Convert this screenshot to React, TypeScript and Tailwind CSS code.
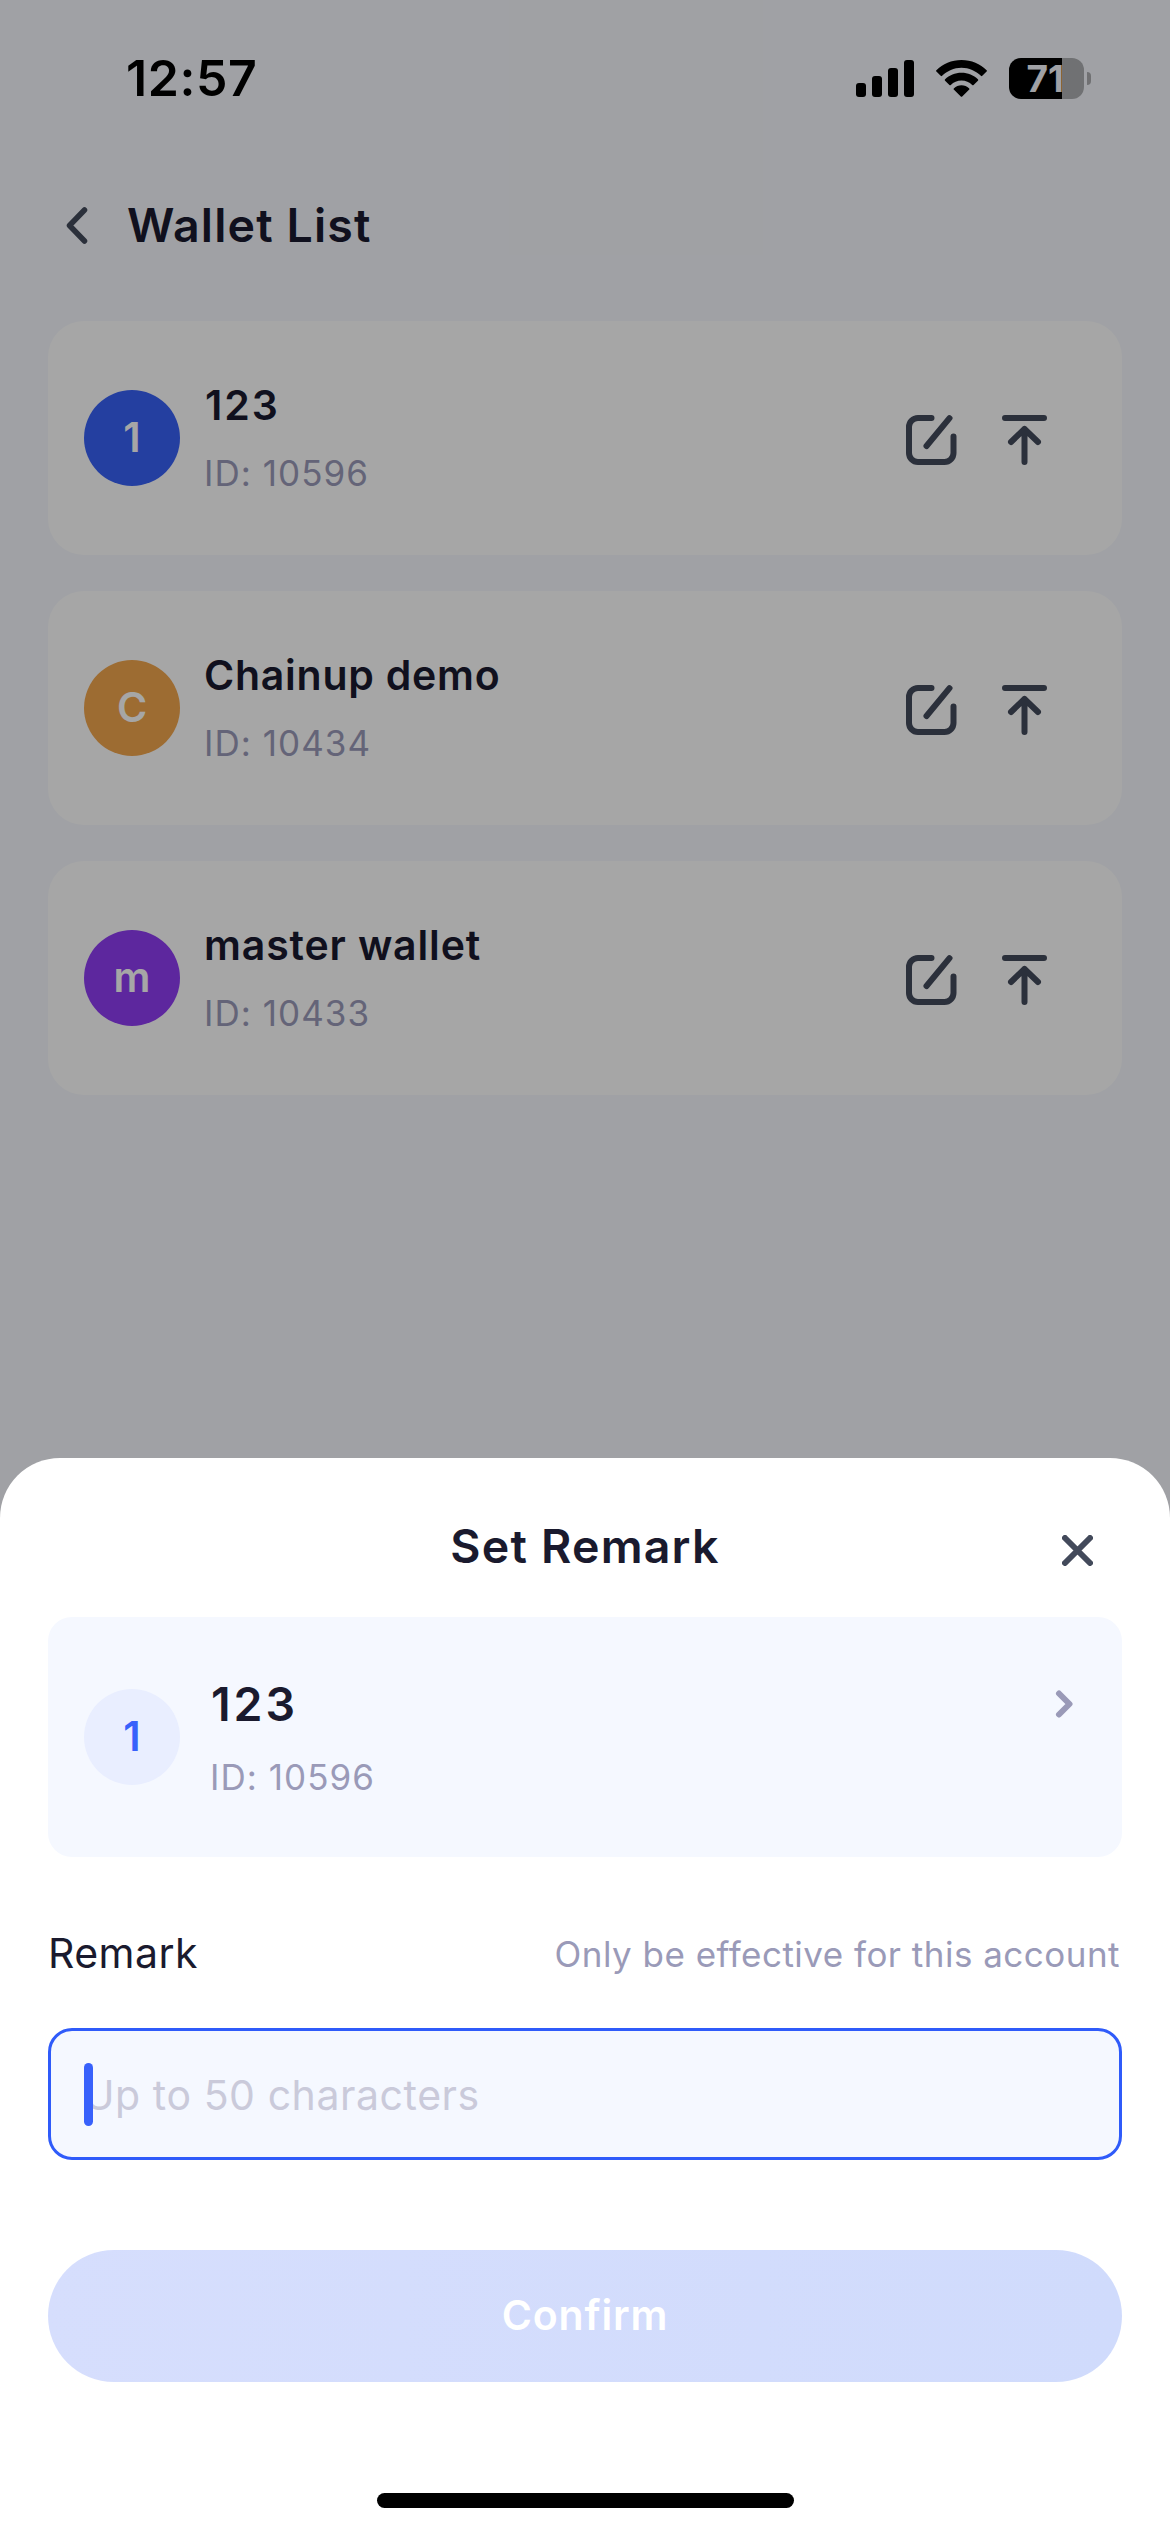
type Wallet = {
  initial: string;
  name: string;
  id: string;
  color: string;
  nameClass: string;
};

const wallets: Wallet[] = [
  { initial: "1", name: "123", id: "10596", color: "bg-[#3861f6]", nameClass: "tracking-[1.95px] pl-px" },
  { initial: "C", name: "Chainup demo", id: "10434", color: "bg-[#f2a64d]", nameClass: "tracking-[0.75px]" },
  { initial: "m", name: "master wallet", id: "10433", color: "bg-[#8f3cf3]", nameClass: "tracking-[0.86px]" },
];

function StatusBar() {
  return (
    <div className="flex h-[156px] items-center pl-[126px] pr-[79px]">
      <span className="text-[50px] leading-[60px] font-semibold tracking-[0.6px] text-black">12:57</span>
      <svg className="ml-auto h-[37px] w-[58px]" viewBox="0 0 58 37">
        <rect x="0" y="23" width="10" height="14" rx="3" />
        <rect x="16" y="16" width="10" height="21" rx="3" />
        <rect x="32" y="8" width="10" height="29" rx="3" />
        <rect x="48" y="0" width="10" height="37" rx="3" />
      </svg>
      <svg className="ml-[22px] h-[37px] w-[51px]" viewBox="0 0 51 37">
        <path d="M25.5 0C35.4 0 44.4 3.9 50.6 10.2a1 1 0 0 1 0 1.4l-4.3 4.2a1 1 0 0 1-1.4 0C39.9 10.9 33 7.7 25.5 7.7S11.1 10.9 6.1 15.8a1 1 0 0 1-1.4 0L.4 11.6a1 1 0 0 1 0-1.4C6.6 3.9 15.6 0 25.5 0Z" />
        <path d="M25.5 12.7c6.4 0 12.2 2.5 16.4 6.5a1 1 0 0 1 0 1.5l-4.3 4.2a1 1 0 0 1-1.4 0c-2.8-2.6-6.5-4.3-10.7-4.3s-7.9 1.7-10.7 4.3a1 1 0 0 1-1.4 0l-4.3-4.2a1 1 0 0 1 0-1.5c4.2-4 10-6.5 16.4-6.5Z" />
        <path d="M25.5 25.3c2.9 0 5.5 1.1 7.5 2.9a1 1 0 0 1 0 1.5l-6.8 6.8a1 1 0 0 1-1.4 0L18 29.7a1 1 0 0 1 0-1.5c2-1.8 4.6-2.9 7.5-2.9Z" />
      </svg>
      <div className="ml-[22px] flex h-[41px] w-[75px] items-center rounded-[12px] bg-linear-to-r from-black from-[53px] to-black/30 to-[53px] pl-[17.5px]">
        <span className="text-[37px] leading-[41px] font-bold text-[#f6f8fd]">71</span>
      </div>
      <div className="ml-[3px] h-[13px] w-[4px] rounded-r-full bg-black/30" />
    </div>
  );
}

function WalletCard({ wallet }: { wallet: Wallet }) {
  return (
    <li className="flex h-[234px] items-center rounded-[36px] bg-white pr-[75px] pl-9">
      <div
        className={`flex size-24 items-center justify-center rounded-full pb-px text-[41px] leading-none font-semibold text-white ${wallet.color}`}
      >
        {wallet.initial}
      </div>
      <div className="ml-6 pt-0.5">
        <p className={`text-[41px] leading-[56px] font-semibold text-[#1a1a2e] ${wallet.nameClass}`}>{wallet.name}</p>
        <p className="mt-3 text-[35px] leading-[57px] tracking-[1.05px] text-[#9a9ab8]">ID: {wallet.id}</p>
      </div>
      <div className="ml-auto flex items-center gap-[45px] pt-1 text-[#434a5b]">
        <svg className="h-[50px] w-[51px]" viewBox="0 0 51 50" fill="none" stroke="currentColor" strokeWidth="6" strokeLinecap="round" strokeLinejoin="round">
          <path d="M25.5 3H12a9 9 0 0 0-9 9v26a9 9 0 0 0 9 9h26.5a9 9 0 0 0 9-9V21.5" />
          <path d="M43.5 3.2 20.5 31" />
        </svg>
        <svg className="h-[50px] w-[45px]" viewBox="0 0 45 50" fill="none" stroke="currentColor" strokeWidth="6" strokeLinecap="round" strokeLinejoin="round">
          <path d="M3 3h39M22.5 47V14M9 27l13.5-13L36 27" />
        </svg>
      </div>
    </li>
  );
}

function WalletListScreen() {
  return (
    <div className="h-full bg-[#f6f8fd]">
      <StatusBar />
      <header className="flex h-[138px] items-center pl-[66px]">
        <svg className="h-[37px] w-[22px] text-[#434a5b]" viewBox="0 0 22 37" fill="none" stroke="currentColor" strokeWidth="5.5" strokeLinecap="round" strokeLinejoin="round">
          <path d="M18.5 3 3.5 18.5 18.5 34" />
        </svg>
        <h1 className="ml-[39px] text-[46.5px] leading-[60px] font-semibold tracking-[1.15px] text-[#1a1a2e]">Wallet List</h1>
      </header>
      <ul className="mt-[27px] flex flex-col gap-9 px-12">
        {wallets.map((wallet) => (
          <WalletCard key={wallet.id} wallet={wallet} />
        ))}
      </ul>
    </div>
  );
}

function RemarkSheet() {
  return (
    <section className="absolute inset-x-0 bottom-0 flex h-[1074px] flex-col rounded-t-[60px] bg-white px-12">
      <div className="grid h-[159px] grid-cols-[1fr_auto_1fr] items-center pt-[17px]">
        <span />
        <h2 className="text-[46.5px] leading-[60px] font-semibold tracking-[1.2px] text-[#1a1a2e]">Set Remark</h2>
        <svg className="mt-[9px] mr-[29px] h-[31px] w-[31px] justify-self-end text-[#434a5b]" viewBox="0 0 31 31" fill="none" stroke="currentColor" strokeWidth="6" strokeLinecap="round">
          <path d="m3 3 25 25M28 3 3 28" />
        </svg>
      </div>

      <div className="flex h-60 items-center rounded-[24px] bg-[#f5f8ff] pl-9">
        <div className="flex size-24 items-center justify-center rounded-full bg-[#e9eeff] pb-px text-[41px] leading-none font-semibold text-[#3861fb]">
          1
        </div>
        <div className="ml-[30px] pt-2">
          <p className="pl-px text-[46.5px] leading-[60px] font-semibold tracking-[2.95px] text-[#1a1a2e]">123</p>
          <p className="mt-3 text-[35px] leading-[63px] tracking-[1.05px] text-[#9a9ab8]">ID: 10596</p>
        </div>
        <svg className="mr-[49px] mb-[66px] ml-auto h-7 w-[18px] text-[#9a9ab8]" viewBox="0 0 18 28" fill="none" stroke="currentColor" strokeWidth="6" strokeLinecap="round" strokeLinejoin="round">
          <path d="m4 3.5 10.5 10.5L4 24.5" />
        </svg>
      </div>

      <div className="mt-[66px] flex h-[60px] items-center justify-between pr-0.5">
        <label className="text-[41px] leading-[60px] tracking-[0.44px] text-[#1a1a2e]">Remark</label>
        <span className="pt-px text-[35px] leading-[60px] tracking-[0.48px] text-[#9a9ab8]">
          Only be effective for this account
        </span>
      </div>

      <div className="relative mt-[45px] flex h-[132px] items-center rounded-[24px] border-[3px] border-[#2f5bfa] bg-[#f5f8ff] pt-0.5 pl-[33px]">
        <span className="text-[41px] leading-[60px] tracking-[0.56px] text-[#cacada]">Up to 50 characters</span>
        <span className="absolute top-8 left-[33px] h-[63px] w-[9px] rounded-full bg-[#3861fb]" />
      </div>

      <button className="mt-[90px] h-[132px] shrink-0 rounded-full bg-linear-to-r from-[#d6defd] to-[#d0dbfc] text-[41px] font-semibold tracking-[0.8px] text-white">
        Confirm
      </button>

      <div className="mt-[111px] h-[15px] w-[417px] shrink-0 self-center rounded-full bg-black" />
    </section>
  );
}

export default function App() {
  return (
    <main className="relative h-[2532px] w-[1170px] overflow-hidden font-['Inter',sans-serif]">
      <WalletListScreen />
      <div className="absolute inset-0 bg-black/35" />
      <RemarkSheet />
    </main>
  );
}
